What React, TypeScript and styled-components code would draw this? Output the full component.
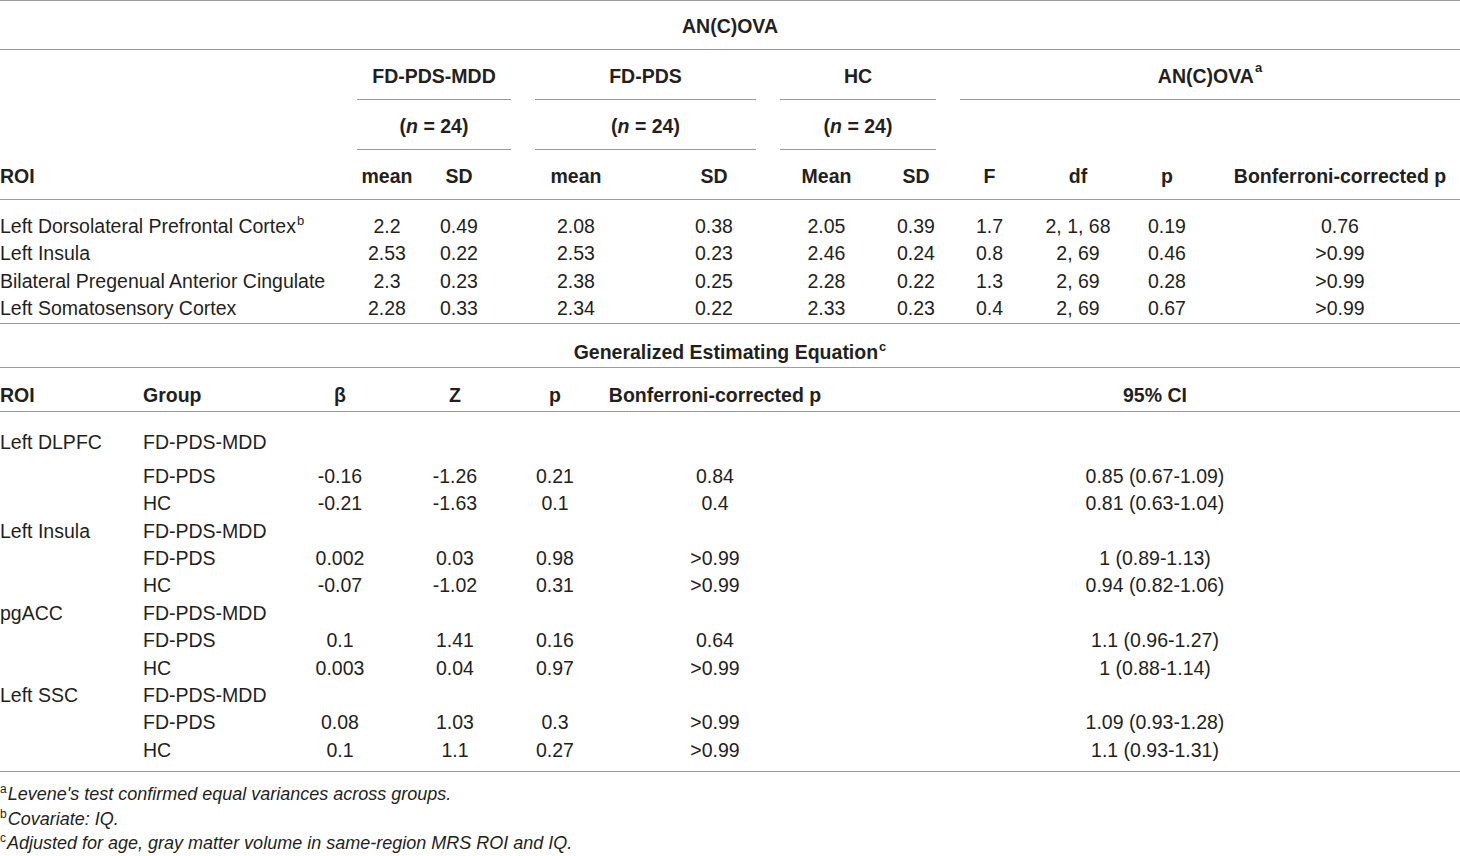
import React from "react";
import styled, { createGlobalStyle } from "styled-components";

const LINE = "#9b9b9b";
const INK = "#231f20";

const GlobalStyle = createGlobalStyle`
  html, body { margin: 0; padding: 0; background: #ffffff; }
  body {
    font-family: "Liberation Sans", Arial, Helvetica, sans-serif;
    color: ${INK};
    font-size: 19.5px;
  }
`;

const Page = styled.div`
  width: 1460px;
  border-top: 1px solid ${LINE};
`;

const Sup = styled.sup`
  font-size: 13px;
  line-height: 0;
  vertical-align: baseline;
  position: relative;
  top: -0.62em;
  font-weight: inherit;
  font-style: normal;
  margin-left: 1px;
`;

/* ---------- AN(C)OVA section ---------- */

const SectionTitle = styled.div`
  height: 49px;
  padding-top: 3px;
  box-sizing: border-box;
  display: flex;
  align-items: center;
  justify-content: center;
  font-weight: 700;
  border-bottom: 1px solid ${LINE};
`;

const GroupRow = styled.div`
  display: flex;
  gap: 24px;
`;

const GroupSpacer = styled.div`
  width: 333px;
  flex: none;
`;

const Group = styled.div<{ $w?: number; $line?: boolean }>`
  ${(p) => (p.$w ? `width: ${p.$w}px; flex: none;` : "flex: 1;")}
  height: 50px;
  padding-top: 3px;
  box-sizing: border-box;
  display: flex;
  align-items: center;
  justify-content: center;
  font-weight: 700;
  white-space: pre;
  border-bottom: 1px solid ${(p) => (p.$line ? LINE : "transparent")};
`;

const HeaderRow = styled.div<{ $h: number; $pt: number }>`
  display: flex;
  height: ${(p) => p.$h}px;
  padding-top: ${(p) => p.$pt}px;
  box-sizing: border-box;
  align-items: center;
  font-weight: 700;
  border-bottom: 1px solid ${LINE};
`;

const Body = styled.div<{ $pt: number; $pb: number }>`
  padding-top: ${(p) => p.$pt}px;
  padding-bottom: ${(p) => p.$pb}px;
  border-bottom: 1px solid ${LINE};
`;

const Row = styled.div<{ $extra?: boolean }>`
  display: flex;
  height: 27.4px;
  line-height: 27.4px;
  margin-bottom: ${(p) => (p.$extra ? "6.6px" : "0")};
  white-space: nowrap;
`;

const Cell = styled.div<{ $w?: number; $left?: boolean }>`
  ${(p) => (p.$w ? `width: ${p.$w}px; flex: none;` : "flex: 1;")}
  text-align: ${(p) => (p.$left ? "left" : "center")};
  white-space: nowrap;
`;

const Italic = styled.i`
  font-style: italic;
`;

/* ---------- GEE section ---------- */

const GeeTitle = styled.div`
  padding-top: 17px;
  padding-bottom: 4px;
  line-height: 22px;
  text-align: center;
  font-weight: 700;
  border-bottom: 1px solid ${LINE};
`;

const Notes = styled.div`
  padding-top: 10px;
  font-size: 18px;
  font-style: italic;
`;

const Note = styled.div`
  line-height: 24.5px;
`;

const NoteMark = styled.sup`
  font-size: 12px;
  line-height: 0;
  vertical-align: baseline;
  position: relative;
  top: -0.6em;
  font-style: normal;
  margin-right: 1px;
`;

const anovaCols = [338, 98, 46, 188, 88, 137, 42, 105, 72, 106, 240];
const anovaHead = ["ROI", "mean", "SD", "mean", "SD", "Mean", "SD", "F", "df", "p", "Bonferroni-corrected p"];
const anovaRows: { roi: string; sup?: string; vals: string[] }[] = [
  { roi: "Left Dorsolateral Prefrontal Cortex", sup: "b", vals: ["2.2", "0.49", "2.08", "0.38", "2.05", "0.39", "1.7", "2, 1, 68", "0.19", "0.76"] },
  { roi: "Left Insula", vals: ["2.53", "0.22", "2.53", "0.23", "2.46", "0.24", "0.8", "2, 69", "0.46", ">0.99"] },
  { roi: "Bilateral Pregenual Anterior Cingulate", vals: ["2.3", "0.23", "2.38", "0.25", "2.28", "0.22", "1.3", "2, 69", "0.28", ">0.99"] },
  { roi: "Left Somatosensory Cortex", vals: ["2.28", "0.33", "2.34", "0.22", "2.33", "0.23", "0.4", "2, 69", "0.67", ">0.99"] },
];

const geeCols = [143, 157, 80, 150, 50, 270, 0];
const geeHead = ["ROI", "Group", "β", "Z", "p", "Bonferroni-corrected p", "95% CI"];
const geeRows: string[][] = [
  ["Left DLPFC", "FD-PDS-MDD", "", "", "", "", ""],
  ["", "FD-PDS", "-0.16", "-1.26", "0.21", "0.84", "0.85 (0.67-1.09)"],
  ["", "HC", "-0.21", "-1.63", "0.1", "0.4", "0.81 (0.63-1.04)"],
  ["Left Insula", "FD-PDS-MDD", "", "", "", "", ""],
  ["", "FD-PDS", "0.002", "0.03", "0.98", ">0.99", "1 (0.89-1.13)"],
  ["", "HC", "-0.07", "-1.02", "0.31", ">0.99", "0.94 (0.82-1.06)"],
  ["pgACC", "FD-PDS-MDD", "", "", "", "", ""],
  ["", "FD-PDS", "0.1", "1.41", "0.16", "0.64", "1.1 (0.96-1.27)"],
  ["", "HC", "0.003", "0.04", "0.97", ">0.99", "1 (0.88-1.14)"],
  ["Left SSC", "FD-PDS-MDD", "", "", "", "", ""],
  ["", "FD-PDS", "0.08", "1.03", "0.3", ">0.99", "1.09 (0.93-1.28)"],
  ["", "HC", "0.1", "1.1", "0.27", ">0.99", "1.1 (0.93-1.31)"],
];

const groups = [
  { name: "FD-PDS-MDD", w: 154 },
  { name: "FD-PDS", w: 221 },
  { name: "HC", w: 156 },
];

const NLabel = () => (
  <>
    {"("}
    <Italic>n</Italic>
    {" = 24)"}
  </>
);

export default function App() {
  return (
    <>
      <GlobalStyle />
      <Page>
        <SectionTitle>AN(C)OVA</SectionTitle>

        <GroupRow>
          <GroupSpacer />
          {groups.map((g) => (
            <Group key={g.name} $w={g.w} $line>
              {g.name}
            </Group>
          ))}
          <Group $line>
            AN(C)OVA<Sup>a</Sup>
          </Group>
        </GroupRow>

        <GroupRow>
          <GroupSpacer />
          {groups.map((g) => (
            <Group key={g.name} $w={g.w} $line>
              <NLabel />
            </Group>
          ))}
          <Group />
        </GroupRow>

        <HeaderRow $h={50} $pt={3}>
          {anovaHead.map((h, i) => (
            <Cell key={i} $w={anovaCols[i]} $left={i === 0}>
              {h}
            </Cell>
          ))}
        </HeaderRow>

        <Body $pt={13} $pb={0}>
          {anovaRows.map((r) => (
            <Row key={r.roi}>
              <Cell $w={anovaCols[0]} $left>
                {r.roi}
                {r.sup && <Sup>{r.sup}</Sup>}
              </Cell>
              {r.vals.map((v, i) => (
                <Cell key={i} $w={anovaCols[i + 1]}>
                  {v}
                </Cell>
              ))}
            </Row>
          ))}
        </Body>

        <GeeTitle>
          Generalized Estimating Equation<Sup>c</Sup>
        </GeeTitle>

        <HeaderRow $h={44} $pt={13}>
          {geeHead.map((h, i) => (
            <Cell key={i} $w={geeCols[i] || undefined} $left={i < 2}>
              {h}
            </Cell>
          ))}
        </HeaderRow>

        <Body $pt={17.3} $pb={7.3}>
          {geeRows.map((r, ri) => (
            <Row key={ri} $extra={ri === 0}>
              {r.map((v, i) => (
                <Cell key={i} $w={geeCols[i] || undefined} $left={i < 2}>
                  {v}
                </Cell>
              ))}
            </Row>
          ))}
        </Body>

        <Notes>
          <Note>
            <NoteMark>a</NoteMark>Levene's test confirmed equal variances across groups.
          </Note>
          <Note>
            <NoteMark>b</NoteMark>Covariate: IQ.
          </Note>
          <Note>
            <NoteMark>c</NoteMark>Adjusted for age, gray matter volume in same-region MRS ROI and IQ.
          </Note>
        </Notes>
      </Page>
    </>
  );
}
